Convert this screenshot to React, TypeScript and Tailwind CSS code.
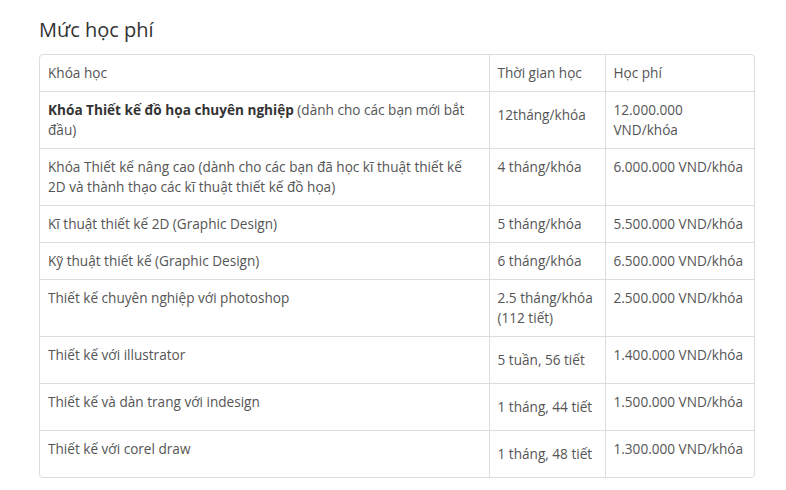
const rows: { name: React.ReactNode; time: React.ReactNode; fee: React.ReactNode; pad?: boolean }[] = [
  {
    name: (
      <>
        <b className="font-bold text-[#333]">Khóa Thiết kế đồ họa chuyên nghiệp</b> (dành cho các bạn mới bắt đầu)
      </>
    ),
    time: <span className="block pt-[5px]">12tháng/khóa</span>,
    fee: "12.000.000 VND/khóa",
  },
  {
    name: "Khóa Thiết kế nâng cao (dành cho các bạn đã học kĩ thuật thiết kế 2D và thành thạo các kĩ thuật thiết kế đồ họa)",
    time: "4 tháng/khóa",
    fee: "6.000.000 VND/khóa",
  },
  { name: "Kĩ thuật thiết kế 2D (Graphic Design)", time: "5 tháng/khóa", fee: "5.500.000 VND/khóa" },
  { name: "Kỹ thuật thiết kế (Graphic Design)", time: "6 tháng/khóa", fee: "6.500.000 VND/khóa" },
  { name: "Thiết kế chuyên nghiệp với photoshop", time: "2.5 tháng/khóa (112 tiết)", fee: "2.500.000 VND/khóa" },
  { name: "Thiết kế với illustrator", time: "5 tuần, 56 tiết", fee: "1.400.000 VND/khóa", pad: true },
  { name: "Thiết kế và dàn trang với indesign", time: "1 tháng, 44 tiết", fee: "1.500.000 VND/khóa", pad: true },
  { name: "Thiết kế với corel draw", time: "1 tháng, 48 tiết", fee: "1.300.000 VND/khóa", pad: true },
];

export default function App() {
  return (
    <div
      className="min-h-[490px] bg-white px-[39px] pt-[16px] text-[13.6px] leading-[20px] text-[#555]"
      style={{ fontFamily: '"Open Sans", "Noto Sans", sans-serif' }}
    >
      <h2 className="mb-[10px] text-[20px] leading-[28px] text-[#333]">Mức học phí</h2>
      <div className="w-[716px] overflow-hidden rounded-[4px] border border-[#ddd]">
        <table className="w-full table-fixed border-collapse">
          <colgroup>
            <col className="w-[449px]" />
            <col className="w-[116px]" />
            <col />
          </colgroup>
          <tbody>
            <tr>
              <td className="px-[8px] py-[8px] align-top">Khóa học</td>
              <td className="border-l border-[#ddd] px-[8px] py-[8px] align-top">Thời gian học</td>
              <td className="border-l border-[#ddd] px-[8px] py-[8px] align-top">Học phí</td>
            </tr>
            {rows.map((r, i) => (
              <tr key={i} className="border-t border-[#ddd]">
                <td className="px-[8px] py-[8px] align-top">{r.name}</td>
                <td className={`border-l border-[#ddd] px-[8px] align-top ${r.pad ? "pt-[13px] pb-[13px]" : "py-[8px]"}`}>
                  {r.time}
                </td>
                <td className={`border-l border-[#ddd] px-[8px] py-[8px] align-top ${i === 0 ? "" : "whitespace-nowrap"}`}>
                  {r.fee}
                </td>
              </tr>
            ))}
          </tbody>
        </table>
      </div>
    </div>
  );
}
